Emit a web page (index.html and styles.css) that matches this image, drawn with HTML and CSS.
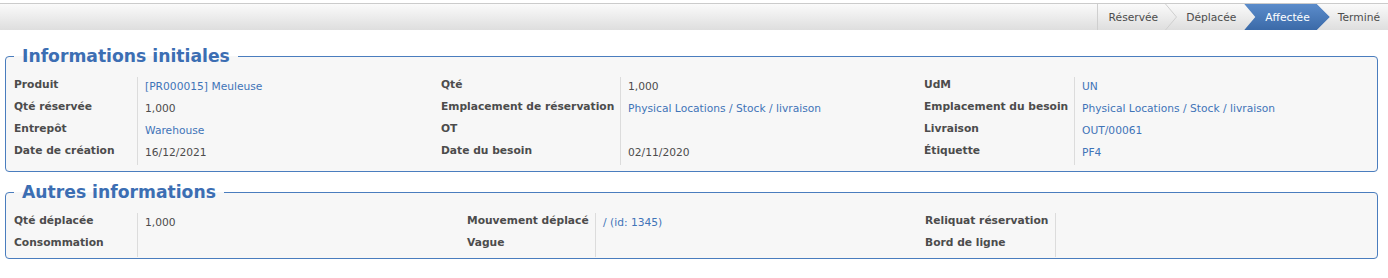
FILE: index.html
```html
<!DOCTYPE html>
<html lang="fr">
<head>
<meta charset="utf-8">
<link rel="stylesheet" href="styles.css">
</head>
<body>
<div class="topbar">
  <ul class="statusbar">
    <li class="step first">Réservée</li>
    <li class="chev"><svg width="12" height="26" viewBox="0 0 12 26"><polyline points="0.5,0 11.5,13 0.5,26" fill="none" stroke="#cfcfcf" stroke-width="1"/></svg></li>
    <li class="step">Déplacée</li>
    <li class="step active">Affectée</li>
    <li class="step last">Terminé</li>
  </ul>
</div>

<fieldset class="group g1">
  <legend>Informations initiales</legend>
  <div class="grid">
    <div class="lbl">Produit</div><div class="val"><a>[PR000015] Meuleuse</a></div>
    <div class="lbl">Qté</div><div class="val">1,000</div>
    <div class="lbl">UdM</div><div class="val"><a>UN</a></div>

    <div class="lbl">Qté réservée</div><div class="val">1,000</div>
    <div class="lbl">Emplacement de réservation</div><div class="val"><a>Physical Locations / Stock / livraison</a></div>
    <div class="lbl">Emplacement du besoin</div><div class="val"><a>Physical Locations / Stock / livraison</a></div>

    <div class="lbl">Entrepôt</div><div class="val"><a>Warehouse</a></div>
    <div class="lbl">OT</div><div class="val"></div>
    <div class="lbl">Livraison</div><div class="val"><a>OUT/00061</a></div>

    <div class="lbl">Date de création</div><div class="val">16/12/2021</div>
    <div class="lbl">Date du besoin</div><div class="val">02/11/2020</div>
    <div class="lbl">Étiquette</div><div class="val"><a>PF4</a></div>
  </div>
</fieldset>

<fieldset class="group g2">
  <legend>Autres informations</legend>
  <div class="grid">
    <div class="lbl">Qté déplacée</div><div class="val">1,000</div>
    <div class="lbl">Mouvement déplacé</div><div class="val"><a>/ (id: 1345)</a></div>
    <div class="lbl">Reliquat réservation</div><div class="val"></div>

    <div class="lbl">Consommation</div><div class="val"></div>
    <div class="lbl">Vague</div><div class="val"></div>
    <div class="lbl">Bord de ligne</div><div class="val"></div>
  </div>
</fieldset>
</body>
</html>
```

FILE: styles.css
```css
html, body {
  margin: 0;
  padding: 0;
  background: #ffffff;
  font-family: "DejaVu Sans", sans-serif;
  color: #4c4c4c;
}

.topbar {
  margin-top: 3px;
  height: 26px;
  border-top: 1px solid #cbcbcb;
  background: linear-gradient(to bottom, #fafafa, #dedede);
  display: flex;
  justify-content: flex-end;
}

.statusbar {
  list-style: none;
  margin: 0;
  padding: 0;
  display: flex;
  align-items: stretch;
  height: 26px;
  border-left: 1px solid #cfcfcf;
  font-size: 10.7px;
}

.statusbar li {
  display: flex;
  align-items: center;
}

.step {
  color: #4c4c4c;
}

.step.first {
  padding: 0 7px 0 11px;
}

.chev {
  width: 12px;
}

.step:nth-child(3) {
  padding: 0 8px 0 9px;
}

.step.active {
  color: #ffffff;
  background: linear-gradient(to bottom, #5b8ccb, #3b6aa8);
  padding: 0 20px 0 21px;
  clip-path: polygon(0 0, calc(100% - 13px) 0, 100% 50%, calc(100% - 13px) 100%, 0 100%, 11px 50%);
}

.step.last {
  padding: 0 8px 0 8px;
}

.group {
  margin: 0 10px 0 5px;
  padding: 0 0 6px 0;
  border: 1px solid #4a7dbe;
  border-radius: 4px;
  background: #f7f7f7;
  min-width: 0;
}

.g1 {
  margin-top: 16px;
}

.g2 {
  margin-top: 10px;
  padding-bottom: 1px;
}

legend {
  margin-left: 8px;
  padding: 0 8px;
  font-size: 17.2px;
  font-weight: bold;
  line-height: 21px;
  color: #3c6eb3;
}

.grid {
  display: grid;
  margin-top: 10px;
}

.g1 .grid {
  grid-template-columns: 131px 296px 187px 296px 158px 1fr;
}

.g2 .grid {
  grid-template-columns: 131px 322px 136px 322px 138px 1fr;
}

.lbl {
  font-size: 10.7px;
  font-weight: bold;
  line-height: 16px;
  padding: 0 0 6px 8px;
  white-space: nowrap;
}

.val {
  font-size: 10.7px;
  line-height: 16px;
  padding: 2px 0 4px 7px;
  border-left: 1px solid #dcdcdc;
  white-space: nowrap;
}

.val a {
  color: #3f74b8;
  text-decoration: none;
}
```
